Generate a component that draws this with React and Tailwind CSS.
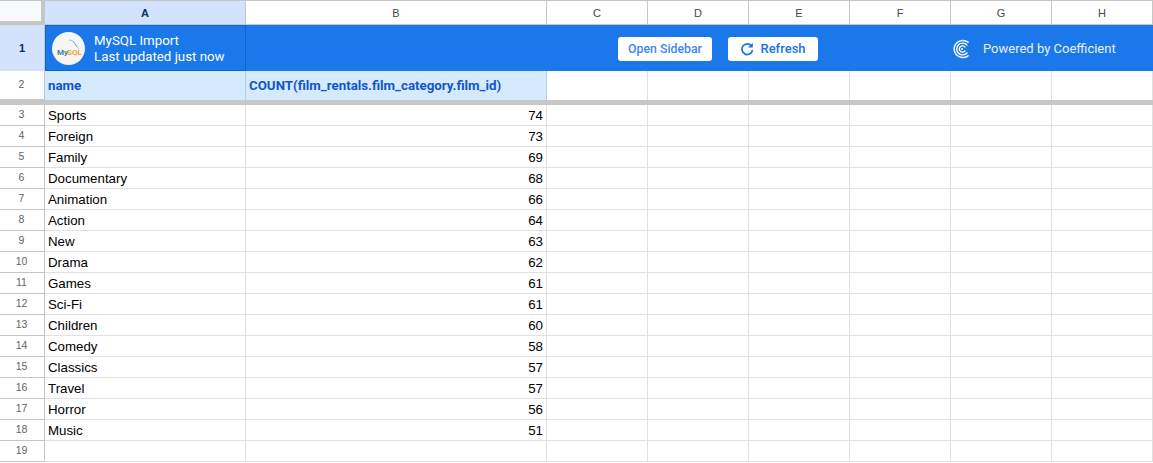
import React from 'react';

const columns = ['A', 'B', 'C', 'D', 'E', 'F', 'G', 'H'];
const widths = ['w-[201px]', 'w-[301px]', 'w-[101px]', 'w-[101px]', 'w-[101px]', 'w-[101px]', 'w-[101px]', 'w-[101px]'];

const rows = [
  ['Sports', 74],
  ['Foreign', 73],
  ['Family', 69],
  ['Documentary', 68],
  ['Animation', 66],
  ['Action', 64],
  ['New', 63],
  ['Drama', 62],
  ['Games', 61],
  ['Sci-Fi', 61],
  ['Children', 60],
  ['Comedy', 58],
  ['Classics', 57],
  ['Travel', 57],
  ['Horror', 56],
  ['Music', 51],
  ['', ''],
];

const RowHeader = ({ n }) => (
  <div className="w-[45px] shrink-0 h-full flex items-center justify-center border-r border-b border-[#c4c7c5] text-[10.5px] text-[#5f6368] pr-px">
    {n}
  </div>
);

const MysqlLogo = () => (
  <div className="w-[33px] h-[33px] rounded-full bg-[#f6f6f4] shrink-0 flex items-center justify-center">
    <svg width="33" height="33" viewBox="0 0 33 33">
      <path d="M17 8c4 0 6 3 7 5s2 3 3 4M21 9c1 2 2 3 4 6" fill="none" stroke="#7fb3c4" strokeWidth="0.8" />
      <text x="5" y="23" fontSize="8" fontWeight="700" fontFamily="Roboto, sans-serif" fill="#2f8a9e">My</text>
      <text x="15" y="23" fontSize="8" fontWeight="700" fontFamily="Roboto, sans-serif" fill="#f0a23a">SQL</text>
    </svg>
  </div>
);

const CoefficientLogo = () => (
  <svg width="17" height="20" viewBox="0 0 17 20" fill="none" stroke="white" strokeLinecap="round" className="shrink-0">
    <path d="M16 3.2A8.6 8.6 0 1 0 16 16.8" strokeWidth="1.5" />
    <path d="M15 6A5.9 5.9 0 1 0 15 14" strokeWidth="1.4" />
    <path d="M13 8A3.2 3.2 0 1 0 13 12" strokeWidth="1.3" />
    <circle cx="10" cy="10" r="1" fill="white" stroke="none" />
  </svg>
);

const RefreshIcon = () => (
  <svg width="14" height="14" viewBox="0 0 14 14" fill="none" stroke="#1a73e8" strokeWidth="1.7" className="shrink-0">
    <path d="M11.4 3.9A5.3 5.3 0 1 0 12.5 8" />
    <path d="M12.8 0.8v4.7h-4.7" fill="#1a73e8" stroke="none" />
  </svg>
);

export default function App() {
  return (
    <div className="w-[1153px] h-[463px] overflow-hidden bg-white text-[13.3px] text-black font-['Liberation_Sans',Arial,sans-serif]">
      {/* column letters */}
      <div className="flex h-[25px] border-t border-[#c4c7c5] bg-white">
        <div className="w-[45px] shrink-0 border-r-4 border-b-4 border-[#c4c7c5] bg-[#f8f9fa]" />
        {columns.map((col, i) => (
          <div
            key={col}
            className={`${widths[i]} shrink-0 flex items-center justify-center pt-px border-r border-b border-[#c4c7c5] text-[11px] ${
              i === 0 ? 'bg-[#d3e3fd] font-bold text-[#0b2f5c]' : 'text-[#444746]'
            }`}
          >
            {col}
          </div>
        ))}
      </div>

      {/* coefficient banner */}
      <div className="flex h-[46px]">
        <div className="w-[45px] shrink-0 flex items-center justify-center bg-[#d3e3fd] border-r border-[#c4c7c5] text-[11px] font-bold text-[#0b2f5c]">
          1
        </div>
        <div className="flex-1 flex items-center bg-[#1a78ea] font-['Roboto',sans-serif] text-white">
          <div className="w-[201px] h-full shrink-0 flex items-center gap-[9px] pl-[6px] border border-[#0d65d0]">
            <MysqlLogo />
            <div className="pt-[2px] text-[13.3px] leading-[16px] whitespace-nowrap">
              <div>MySQL Import</div>
              <div>Last updated just now</div>
            </div>
          </div>
          <div className="flex items-center pt-[2px]">
            <button className="ml-[372px] w-[94px] h-[24px] rounded-[3px] bg-white text-[#4285f4] text-[12.3px] font-medium">
              Open Sidebar
            </button>
            <button className="ml-[16px] w-[90px] h-[24px] rounded-[3px] bg-white text-[#1a73e8] text-[13px] font-medium flex items-center justify-center gap-[6px]">
              <RefreshIcon />
              Refresh
            </button>
            <div className="ml-[134px] flex items-center gap-[14px]">
              <CoefficientLogo />
              <span className="text-[13px] text-[#e8f0fe] whitespace-nowrap">Powered by Coefficient</span>
            </div>
          </div>
        </div>
      </div>

      {/* column names */}
      <div className="flex h-[29px]">
        <RowHeader n={2} />
        <div className="w-[201px] shrink-0 flex items-center pl-[3px] bg-[#d5eafd] border-r border-[#b7cde3] font-['Roboto',sans-serif] font-bold text-[13.3px] text-[#1155cc]">
          name
        </div>
        <div className="w-[301px] shrink-0 flex items-center pl-[3px] bg-[#d5eafd] border-r border-[#b7cde3] font-['Roboto',sans-serif] font-bold text-[13.3px] text-[#1155cc] whitespace-nowrap">
          COUNT(film_rentals.film_category.film_id)
        </div>
        {widths.slice(2).map((w, i) => (
          <div key={i} className={`${w} shrink-0 border-r border-[#e1e1e1]`} />
        ))}
      </div>

      {/* frozen row divider */}
      <div className="h-[5px] bg-[#c7c7c7]" />

      {/* data rows */}
      {rows.map(([name, count], i) => (
        <div key={i} className="flex h-[21px]">
          <RowHeader n={i + 3} />
          <div className="w-[201px] shrink-0 flex items-center pl-[3px] pt-px border-r border-b border-[#e1e1e1]">{name}</div>
          <div className="w-[301px] shrink-0 flex items-center justify-end pr-[3px] pt-px border-r border-b border-[#e1e1e1]">{count}</div>
          {widths.slice(2).map((w, j) => (
            <div key={j} className={`${w} shrink-0 border-r border-b border-[#e1e1e1]`} />
          ))}
        </div>
      ))}
    </div>
  );
}
